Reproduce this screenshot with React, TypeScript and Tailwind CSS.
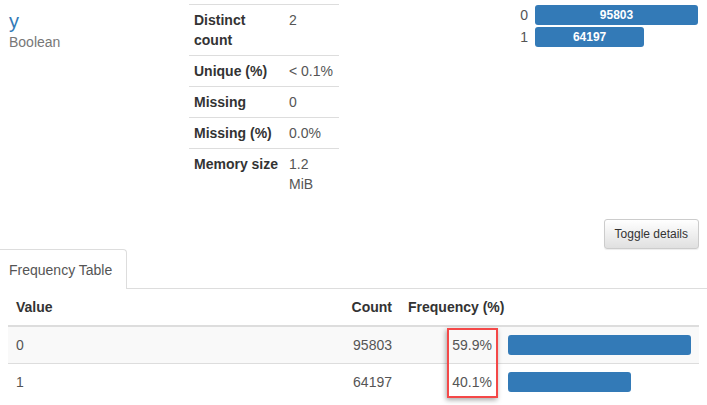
const stats = [
    { label: ["Distinct", "count"], value: ["2"] },
    { label: ["Unique (%)"], value: ["< 0.1%"] },
    { label: ["Missing"], value: ["0"] },
    { label: ["Missing (%)"], value: ["0.0%"] },
    { label: ["Memory size"], value: ["1.2", "MiB"] },
];

const counts = [
    { value: "0", count: 95803, pct: "59.9%" },
    { value: "1", count: 64197, pct: "40.1%" },
];

const maxCount = 95803;

export default function App() {
    return (
        <div className="relative w-[707px] h-[405px] overflow-hidden bg-white text-[14px] leading-[20px] text-[#333] font-['Liberation_Sans',Arial,sans-serif]">
            {/* variable overview */}
            <div className="flex">
                <div className="w-[189px] pl-[9px] pt-[10px]">
                    <div className="text-[20px] leading-[22px] text-[#337ab7]">y</div>
                    <div className="text-[#777]">Boolean</div>
                </div>

                <table className="mt-[4px] w-[150px] table-fixed border-collapse self-start">
                    <tbody>
                        {stats.map((s, i) => (
                            <tr key={i} className="border-t border-[#ddd] align-top">
                                <th className="w-[95px] px-[5px] py-[5px] text-left font-bold">
                                    {s.label.map((l, j) => (
                                        <div key={j} className="whitespace-nowrap">{l}</div>
                                    ))}
                                </th>
                                <td className="w-[55px] px-[5px] py-[5px] text-[#555]">
                                    {s.value.map((v, j) => (
                                        <div key={j} className="whitespace-nowrap">{v}</div>
                                    ))}
                                </td>
                            </tr>
                        ))}
                    </tbody>
                </table>

                <div className="flex-1 flex justify-end pr-[9px] pt-[4px]">
                    <div className="flex flex-col">
                        {counts.map((c) => (
                            <div key={c.value} className="flex items-center py-[1px]">
                                <span className="w-[20px] pr-[7px] text-right text-[#555]">{c.value}</span>
                                <div className="w-[163px]">
                                    <div
                                        className="h-[20px] rounded-[3px] bg-[#337ab7] text-center text-[12px] font-bold leading-[20px] text-white"
                                        style={{ width: `${(c.count / maxCount) * 100}%` }}
                                    >
                                        {c.count}
                                    </div>
                                </div>
                            </div>
                        ))}
                    </div>
                </div>
            </div>

            <div className="mt-[20px] flex justify-end pr-[8px]">
                <button className="h-[30px] rounded-[3px] border border-[#ccc] bg-linear-to-b from-white to-[#e0e0e0] px-[10px] text-[12px] leading-[18px] text-[#333] shadow-[0_1px_1px_rgba(0,0,0,0.075)]">
                    Toggle details
                </button>
            </div>

            {/* tabs */}
            <div className="flex border-b border-[#ddd]">
                <div className="relative -mb-px h-[40px] w-[127px] rounded-tr-[4px] border-t border-r border-[#ddd] bg-white pl-[9px] pt-[10px] text-[#555]">
                    Frequency Table
                </div>
            </div>

            <table className="mx-[8px] w-[691px] table-fixed border-collapse">
                <colgroup>
                    <col className="w-[332px]" />
                    <col className="w-[60px]" />
                    <col className="w-[100px]" />
                    <col className="w-[199px]" />
                </colgroup>
                <thead>
                    <tr className="border-b-2 border-[#ddd]">
                        <th className="px-[8px] py-[8px] text-left font-bold">Value</th>
                        <th className="px-[8px] py-[8px] text-right font-bold">Count</th>
                        <th colSpan={2} className="px-[8px] py-[8px] text-left font-bold">Frequency (%)</th>
                    </tr>
                </thead>
                <tbody>
                    {counts.map((c, i) => (
                        <tr key={c.value} className={`border-t border-[#ddd] ${i % 2 === 0 ? "bg-[#f9f9f9]" : ""}`}>
                            <td className="px-[8px] py-[8px] text-[#555]">{c.value}</td>
                            <td className="px-[8px] py-[8px] text-right text-[#555]">{c.count}</td>
                            <td className="px-[8px] py-[8px] text-right text-[#555]">{c.pct}</td>
                            <td className="px-[8px] py-[8px]">
                                <div
                                    className="h-[20px] rounded-[3px] bg-[#337ab7]"
                                    style={{ width: `${(c.count / maxCount) * 100}%` }}
                                />
                            </td>
                        </tr>
                    ))}
                </tbody>
            </table>

            {/* highlight annotation */}
            <div className="pointer-events-none absolute left-[447px] top-[328px] h-[70px] w-[51px] border-2 border-[#f44848] shadow-[-1px_2px_5px_rgba(0,0,0,0.35)]" />
        </div>
    );
}
